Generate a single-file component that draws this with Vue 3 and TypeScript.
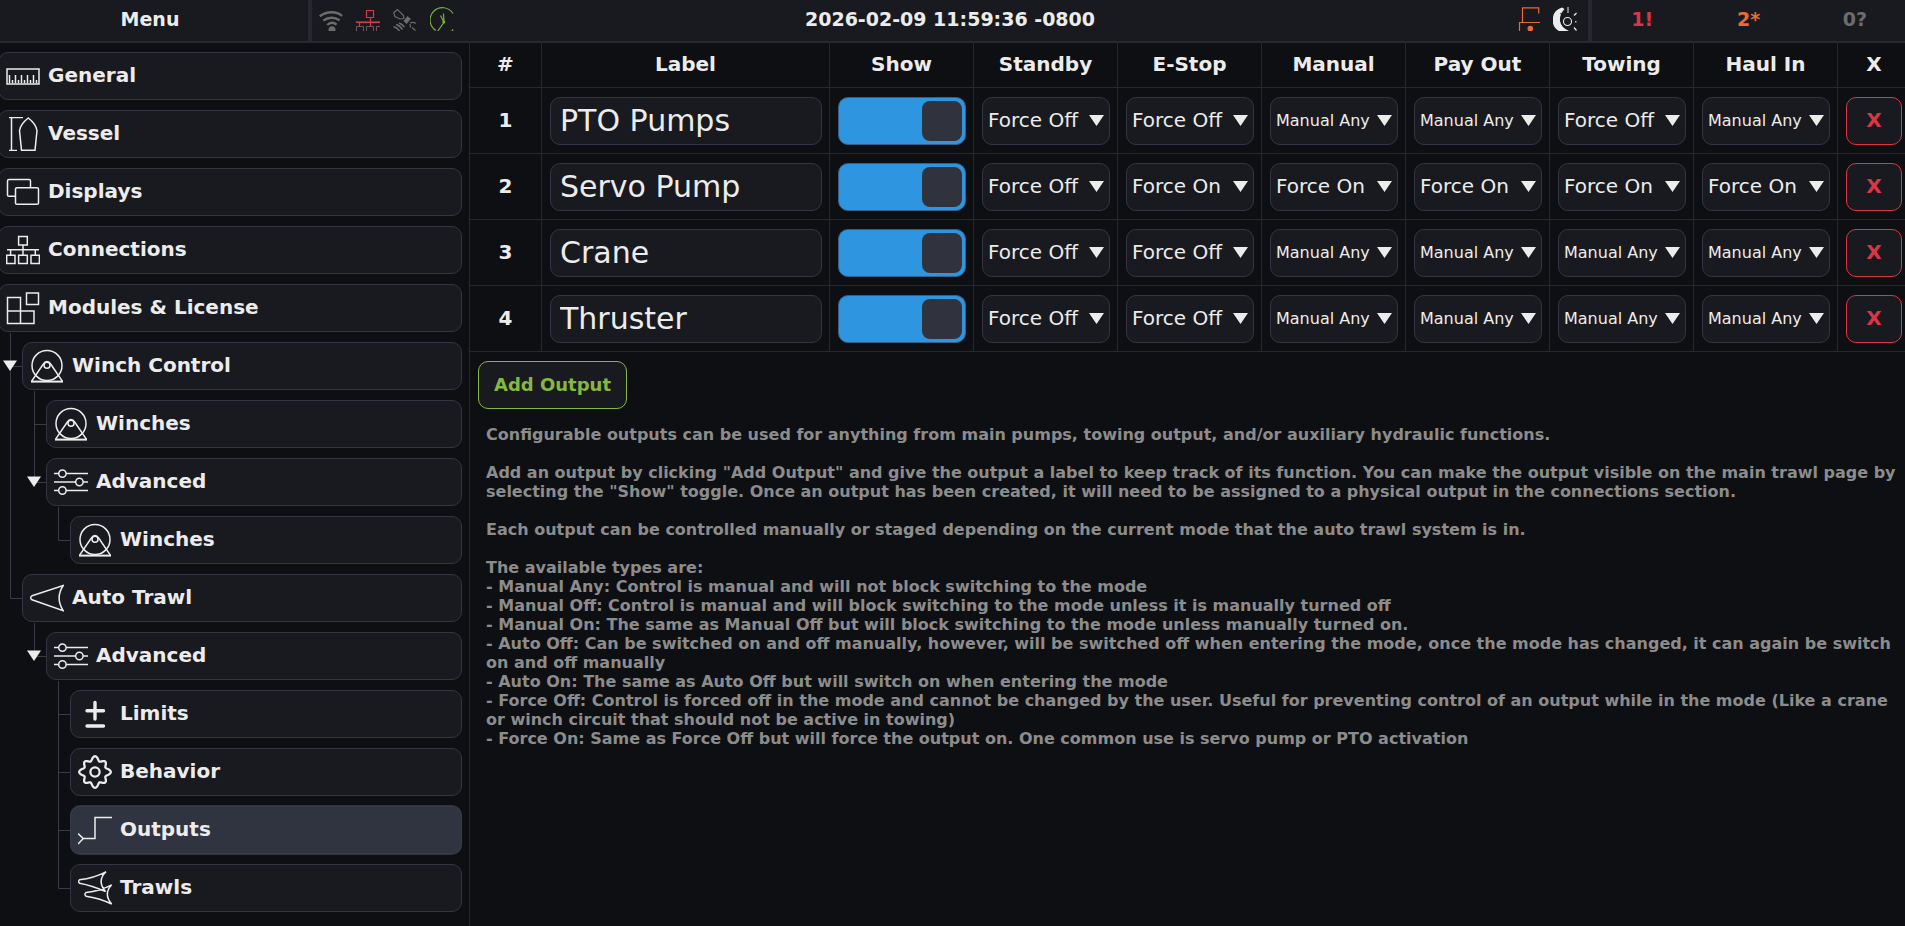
<script setup lang="ts">
import { ref } from 'vue'

type Guide = 'none' | 'line' | 'tee' | 'elbow'
type IconName =
  | 'ruler' | 'vessel' | 'displays' | 'network' | 'modules' | 'winch'
  | 'sliders' | 'trawl' | 'limits' | 'gear' | 'output' | 'trawls'

interface MenuRow {
  id: string
  label: string
  icon: IconName
  guides: Guide[]
  open?: boolean
}

interface Output {
  label: string
  show: boolean
  modes: string[]
}

const menu: MenuRow[] = [
  { id: 'general', label: 'General', icon: 'ruler', guides: [] },
  { id: 'vessel', label: 'Vessel', icon: 'vessel', guides: [] },
  { id: 'displays', label: 'Displays', icon: 'displays', guides: [] },
  { id: 'connections', label: 'Connections', icon: 'network', guides: [] },
  { id: 'modules', label: 'Modules & License', icon: 'modules', guides: [] },
  { id: 'winch', label: 'Winch Control', icon: 'winch', guides: ['tee'], open: true },
  { id: 'winch-list', label: 'Winches', icon: 'winch', guides: ['line', 'tee'] },
  { id: 'winch-adv', label: 'Advanced', icon: 'sliders', guides: ['line', 'elbow'], open: true },
  { id: 'winch-adv-list', label: 'Winches', icon: 'winch', guides: ['line', 'none', 'elbow'] },
  { id: 'trawl', label: 'Auto Trawl', icon: 'trawl', guides: ['elbow'] },
  { id: 'trawl-adv', label: 'Advanced', icon: 'sliders', guides: ['none', 'elbow'], open: true },
  { id: 'limits', label: 'Limits', icon: 'limits', guides: ['none', 'none', 'tee'] },
  { id: 'behavior', label: 'Behavior', icon: 'gear', guides: ['none', 'none', 'tee'] },
  { id: 'outputs', label: 'Outputs', icon: 'output', guides: ['none', 'none', 'tee'] },
  { id: 'trawls', label: 'Trawls', icon: 'trawls', guides: ['none', 'none', 'elbow'] },
]

const guidePaths: Record<Guide, string> = {
  none: '',
  line: 'M12.5 -5V58',
  tee: 'M12.5 -4V58M12.5 29.5H24',
  elbow: 'M12.5 -4V29.5H24',
}

const iconPaths: Record<Exclude<IconName, 'gear' | 'limits' | 'sliders' | 'winch'>, string> = {
  ruler:
    'M1 10H33V25H1ZM3.5 16V24M9.5 16V24M15.5 16V24M21.5 16V24M27.5 16V24M6.5 21V24M12.5 21V24M18.5 21V24M24.5 21V24M30.5 21V24',
  vessel:
    'M3 .5H17M5.5 .5V33.5M3 33.5H11M22.3 1Q14.5 7 13.5 13.5L15.5 33.2H29L31 13.5Q30 7 22.3 1Z',
  displays:
    'M9.5 21.3H3Q1.5 21.3 1.5 20V6Q1.5 4.5 3 4.5H23Q24.5 4.5 24.5 6V12.5M11 12.7H31Q32.5 12.7 32.5 14V28Q32.5 29.3 31 29.3H11Q9.5 29.3 9.5 28V14Q9.5 12.7 11 12.7Z',
  network:
    'M12.6 3.6H21.3V12H12.6ZM17 12V22M1 16.7H33M4.6 16.7V22M29.3 16.7V22M.7 22.3H9V30.6H.7ZM12.6 22.3H21.3V30.6H12.6ZM25 22.3H33.4V30.6H25Z',
  modules: 'M1.5 6.5H14.5V20H1.5ZM1.5 20H28V32.5H1.5ZM14.5 20V32.5M20.5 2H32.5V13.5H20.5Z',
  trawl: 'M2 14.8L33.2 4.5Q25 17 33.2 29.6L2 18.8Q-.8 16.8 2 14.8Z',
  output: 'M0 20.5L5.3 25.6L0 31M5.3 25.6H17V4.5H34',
  trawls:
    'M1.5 8.8Q16 7 28 .8Q18.5 10 27.5 20.5Q14 14.5 1.5 12.2Q-.3 10.5 1.5 8.8ZM8 21.5Q22 20 33.7 13.8Q25 23 33.7 33Q21 27 8 25.2Q5.8 23.3 8 21.5Z',
}

/* Eight-lobed outline, with the four cardinal lobes reaching slightly further. */
const gearPath = (() => {
  const points: string[] = []
  for (let i = 0; i < 192; i++) {
    const a = (i / 192) * Math.PI * 2
    const r = 13.3 + 1.9 * Math.cos(8 * a) + 0.6 * Math.cos(4 * a)
    points.push(`${(17 + r * Math.cos(a)).toFixed(2)} ${(17 + r * Math.sin(a)).toFixed(2)}`)
  }
  return `M${points.join('L')}Z`
})()

const selected = ref('outputs')

const modeNames = ['Standby', 'E-Stop', 'Manual', 'Pay Out', 'Towing', 'Haul In']
const modeTypes = ['Manual Any', 'Manual Off', 'Manual On', 'Auto Off', 'Auto On', 'Force Off', 'Force On']

const outputs = ref<Output[]>([
  { label: 'PTO Pumps', show: true, modes: ['Force Off', 'Force Off', 'Manual Any', 'Manual Any', 'Force Off', 'Manual Any'] },
  { label: 'Servo Pump', show: true, modes: ['Force Off', 'Force On', 'Force On', 'Force On', 'Force On', 'Force On'] },
  { label: 'Crane', show: true, modes: ['Force Off', 'Force Off', 'Manual Any', 'Manual Any', 'Manual Any', 'Manual Any'] },
  { label: 'Thruster', show: true, modes: ['Force Off', 'Force Off', 'Manual Any', 'Manual Any', 'Manual Any', 'Manual Any'] },
])

function addOutput() {
  outputs.value.push({ label: '', show: true, modes: modeNames.map(() => 'Manual Any') })
}

function removeOutput(index: number) {
  outputs.value.splice(index, 1)
}

const types = [
  'Manual Any: Control is manual and will not block switching to the mode',
  'Manual Off: Control is manual and will block switching to the mode unless it is manually turned off',
  'Manual On: The same as Manual Off but will block switching to the mode unless manually turned on.',
  'Auto Off: Can be switched on and off manually, however, will be switched off when entering the mode, once the mode has changed, it can again be switch on and off manually',
  'Auto On: The same as Auto Off but will switch on when entering the mode',
  'Force Off: Control is forced off in the mode and cannot be changed by the user. Useful for preventing control of an output while in the mode (Like a crane or winch circuit that should not be active in towing)',
  'Force On: Same as Force Off but will force the output on. One common use is servo pump or PTO activation',
]
</script>

<template>
  <div class="app">
    <header class="topbar">
      <button type="button" class="menu-button">Menu</button>
      <div class="status">
        <div class="status-icons">
          <svg class="status-icon" viewBox="0 0 24 24" aria-hidden="true">
            <g fill="none" stroke="#6c6c6c" stroke-width="2.4">
              <path d="M.8 9.2Q6 5.2 12.5 5.2T23 8.8" />
              <path d="M4.3 13.6Q8 10.8 12.5 10.8T20.6 13.2" />
              <path d="M8.2 18Q10.5 15.8 13 15.8T17.6 17.6" />
            </g>
            <circle cx="13" cy="22.8" r="3.5" fill="#6c6c6c" />
          </svg>
          <svg class="status-icon" viewBox="0 0 24 24" aria-hidden="true">
            <path d="M.5 24V19.5H7.5V24M10.5 24V19.5H17.5V24M20.5 24V19.5H24" fill="none" stroke="#70565a" />
            <path d="M10.5 3.5H17.5V10.5H10.5ZM14.5 10.5V19M3.5 15V19" fill="none" stroke="#dc3545" stroke-width="1.2" />
            <path d="M0 15.2H24" stroke="#dc3545" stroke-width="1.6" />
          </svg>
          <svg class="status-icon" viewBox="0 0 24 24" aria-hidden="true">
            <g fill="none" stroke="#6c6c6c" stroke-width="1.2">
              <path d="M.8 5.5L4.5 2.5L10.5 8.5L10.8 11.5L7 12L1.8 9.5Z" />
              <path d="M.5 19.5Q4 20.5 6.500 24M3 17.500Q7 18.500 9.500 22.500M6 16Q9 17 11.500 20" stroke-width="1.5" />
              <path d="M17 16Q20 14.5 23 16.5M17 17L17.5 20.5M19 20.5L22.5 23.5" />
            </g>
            <path d="M10.5 14L14.5 9L17.8 12L13.5 17Z" fill="#6c6c6c" />
          </svg>
          <svg class="status-icon" viewBox="0 0 24 24" aria-hidden="true">
            <g fill="none" stroke="#7cae3f" stroke-width="1.2">
              <path d="M5.8 23.5A12.4 12.4 0 1 1 23 6.5" />
              <path d="M7.8 24L13.5 16M13.5 6.5L14 15.5M10.5 8.5L13.8 15" />
              <path d="M21.8 24L23.2 22.5" />
            </g>
            <circle cx="13.8" cy="15" r="1.5" fill="#7cae3f" />
          </svg>
        </div>
        <time class="clock" datetime="2026-02-09T11:59:36-08:00">2026-02-09 11:59:36 -0800</time>
        <div class="status-icons end">
          <svg class="status-icon" viewBox="0 0 24 24" aria-hidden="true">
            <path d="M4.5 15.5V.8H20.7V6.5M1.5 24V15.5H22" fill="none" stroke="#ea6a33" stroke-width="1.2" />
            <circle cx="12.3" cy="21.6" r="2.8" fill="#ea6a33" />
          </svg>
          <svg class="status-icon" viewBox="0 0 24 24" aria-hidden="true">
            <path d="M9 .5A12.9 12.9 0 0 0 6 24H16Q8 20.500 7 14Q6.500 7 11.500 2Z" fill="#ececec" />
            <circle cx="14.5" cy="14.5" r="4" fill="#191a1f" stroke="#ececec" stroke-width="1.1" />
            <path d="M15 0V6" stroke="#9a9a9a" stroke-width="1.6" />
            <path d="M21 8.5L23.5 6M21 20.5L23.5 23.5M22.8 14V15.5" stroke="#ececec" stroke-width="1.2" />
            <path d="M7.5 6L9.5 8.5" stroke="#191a1f" stroke-width="1.1" />
          </svg>
        </div>
      </div>
      <div class="alerts">
        <span class="alert critical">1!</span>
        <span class="alert warning">2*</span>
        <span class="alert unknown">0?</span>
      </div>
    </header>

    <div class="body">
      <nav class="sidebar" aria-label="Menu">
        <ul class="tree">
          <li v-for="row in menu" :key="row.id" class="tree-row">
            <svg
              v-for="(guide, g) in row.guides"
              :key="g"
              class="guide"
              viewBox="0 0 24 58"
              aria-hidden="true"
            >
              <path :d="guidePaths[guide]" class="guide-line" />
              <path v-if="row.open && g === row.guides.length - 1" d="M5 23.5H19L12 34Z" class="guide-arrow" />
            </svg>
            <button
              type="button"
              class="tree-item"
              :class="{ selected: row.id === selected }"
              @click="selected = row.id"
            >
              <svg class="icon" viewBox="0 0 34 34" aria-hidden="true">
                <template v-if="row.icon === 'winch'">
                  <circle cx="17" cy="16.5" r="15" />
                  <circle cx="17" cy="16.2" r="3" />
                  <path d="M1.5 32.3L13 15.5Q17 9.5 21 15.5L32.5 32.3" />
                  <path d="M1 32.6H33" class="thick" />
                </template>
                <template v-else-if="row.icon === 'sliders'">
                  <path d="M0 8.6H34M0 17H34M0 25.5H34" />
                  <g class="knobs">
                    <circle cx="8.4" cy="8.6" r="3.7" />
                    <circle cx="25.4" cy="17" r="3.7" />
                    <circle cx="8.4" cy="25.5" r="3.7" />
                  </g>
                </template>
                <template v-else-if="row.icon === 'limits'">
                  <path d="M17 5.5V22M9 13.7H25.5M9 29H25.5" class="heavy" />
                </template>
                <template v-else-if="row.icon === 'gear'">
                  <path :d="gearPath" class="bold" />
                  <circle cx="17" cy="17" r="4.6" class="bold" />
                </template>
                <path v-else :d="iconPaths[row.icon]" />
              </svg>
              <span class="tree-label">{{ row.label }}</span>
            </button>
          </li>
        </ul>
      </nav>

      <main class="content">
        <table class="outputs">
          <colgroup>
            <col class="col-number" />
            <col class="col-label" />
            <col v-for="n in 7" :key="n" class="col-mode" />
            <col class="col-remove" />
          </colgroup>
          <thead>
            <tr>
              <th scope="col">#</th>
              <th scope="col">Label</th>
              <th scope="col">Show</th>
              <th v-for="name in modeNames" :key="name" scope="col">{{ name }}</th>
              <th scope="col">X</th>
            </tr>
          </thead>
          <tbody>
            <tr v-for="(output, i) in outputs" :key="i">
              <th scope="row">{{ i + 1 }}</th>
              <td>
                <input v-model="output.label" type="text" class="text-box" :aria-label="`Label ${i + 1}`" />
              </td>
              <td>
                <input v-model="output.show" type="checkbox" class="toggle" :aria-label="`Show ${i + 1}`" />
              </td>
              <td v-for="(name, m) in modeNames" :key="name">
                <div class="select-wrap">
                  <select
                    v-model="output.modes[m]"
                    class="select"
                    :class="{ small: output.modes[m].length > 9 }"
                    :aria-label="`${name} ${i + 1}`"
                  >
                    <option v-for="type in modeTypes" :key="type">{{ type }}</option>
                  </select>
                  <svg class="select-arrow" viewBox="0 0 15 11" aria-hidden="true">
                    <path d="M0 0H15L7.5 11Z" />
                  </svg>
                </div>
              </td>
              <td>
                <button type="button" class="remove" @click="removeOutput(i)">X</button>
              </td>
            </tr>
          </tbody>
        </table>

        <button type="button" class="add" @click="addOutput">Add Output</button>

        <section class="help">
          <p>Configurable outputs can be used for anything from main pumps, towing output, and/or auxiliary hydraulic functions.</p>
          <p>Add an output by clicking "Add Output" and give the output a label to keep track of its function. You can make the output visible on the main trawl page by selecting the "Show" toggle. Once an output has been created, it will need to be assigned to a physical output in the connections section.</p>
          <p>Each output can be controlled manually or staged depending on the current mode that the auto trawl system is in.</p>
          <div>
            The available types are:
            <ul class="types">
              <li v-for="type in types" :key="type">- {{ type }}</li>
            </ul>
          </div>
        </section>
      </main>
    </div>
  </div>
</template>

<style>
body {
  margin: 0;
  background: #0e0f12;
}
</style>

<style scoped>
.app {
  display: flex;
  flex-direction: column;
  min-height: 100vh;
  background: #0e0f12;
  color: #ececec;
  font-family: "DejaVu Sans", Verdana, sans-serif;
  font-size: 20px;
  font-weight: bold;
}

button,
input,
select {
  box-sizing: border-box;
  margin: 0;
  font: inherit;
  color: inherit;
}

button {
  cursor: pointer;
}

.topbar {
  display: flex;
  height: 41px;
  background: #191a1f;
  border-bottom: 2px solid #272731;
  font-size: 19px;
}

.menu-button {
  width: 312px;
  padding: 0 8px 3px 0;
  border: 0;
  border-right: 4px solid #272731;
  background: transparent;
}

.status {
  flex: 1;
  display: grid;
  grid-template-columns: 1fr auto 1fr;
  align-items: center;
  padding: 0 11px 4px 7px;
}

.status-icons {
  display: flex;
  gap: 13px;
}

.status-icons.end {
  justify-content: flex-end;
  gap: 11px;
}

.status-icon {
  width: 24px;
  height: 24px;
  overflow: hidden;
}

.clock {
  margin-left: 4px;
}

.alerts {
  display: flex;
  gap: 6px;
  align-items: center;
  width: 313px;
  padding-bottom: 4px;
  border-left: 4px solid #272731;
}

.alert {
  flex: 1;
  text-align: center;
}

.critical {
  color: #dc3545;
}

.warning {
  color: #ea6a33;
}

.unknown {
  color: #6c6c6c;
}

.body {
  flex: 1;
  display: flex;
}

.sidebar {
  box-sizing: border-box;
  flex: none;
  width: 470px;
  padding: 4px 7px 4px 0;
  border-right: 1px solid #272731;
}

.tree {
  margin: 0 0 0 -2px;
  padding: 0;
  list-style: none;
}

.tree-row {
  display: flex;
  align-items: center;
  height: 58px;
}

.guide {
  flex: none;
  width: 24px;
  height: 58px;
  overflow: visible;
}

.guide-line {
  fill: none;
  stroke: #3a3a4a;
}

.guide-arrow {
  fill: #ececec;
}

.tree-item {
  flex: 1;
  display: flex;
  align-items: center;
  gap: 8px;
  height: 48px;
  padding: 0 7px;
  background: #191a1f;
  border: 1px solid #343443;
  border-radius: 10px;
  text-align: left;
}

.tree-item.selected {
  background: #2f3440;
  border-color: #353b4b;
  box-shadow: 0 1px 0 #2f3440, 0 -1px 0 #2f3440;
}

.tree-label {
  padding-bottom: 3px;
}

.icon {
  flex: none;
  width: 34px;
  height: 34px;
  fill: none;
  stroke: #ececec;
  stroke-width: 1.5;
}

.icon .knobs {
  fill: #191a1f;
}

.icon .thick {
  stroke-width: 2;
}

.icon .bold {
  stroke-width: 2.3;
}

.icon .heavy {
  stroke-width: 3.4;
  stroke-linecap: round;
}

.content {
  flex: 1;
  min-width: 0;
}

.outputs {
  width: 100%;
  table-layout: fixed;
  border-collapse: separate;
  border-spacing: 0;
}

.col-number {
  width: 72px;
}

.col-label {
  width: 288px;
}

.col-remove {
  width: 67px;
}

.outputs th,
.outputs td {
  padding: 9px 7px 8px 8px;
  border-right: 1px solid #272731;
  border-bottom: 1px solid #272731;
}

.outputs th {
  padding: 0 0 2px;
  text-align: center;
}

.outputs thead th {
  height: 42px;
}

.outputs tr > :last-child {
  padding-right: 3px;
  padding-left: 8px;
  border-right: 0;
}

.text-box,
.toggle,
.select,
.remove {
  display: block;
  width: 100%;
  height: 48px;
  background: #191a1f;
  border: 1px solid #343443;
  border-radius: 10px;
}

.text-box {
  padding: 0 9px 2px;
  font-size: 30px;
  font-weight: normal;
}

.toggle {
  appearance: none;
  display: flex;
  align-items: center;
  padding: 0 3px;
  border-color: #35608a;
}

.toggle:checked {
  justify-content: flex-end;
  background: #2e96e0;
}

.toggle::before {
  content: "";
  width: 40px;
  height: 40px;
  border-radius: 8px;
  background: #30323e;
}

.select-wrap {
  display: grid;
  grid-template-columns: 1fr 15px 6px;
  align-items: center;
}

.select {
  appearance: none;
  grid-area: 1 / 1 / 2 / 4;
  padding: 0 22px 2px 5px;
  font-weight: normal;
}

.select.small {
  font-size: 16px;
}

.select-arrow {
  grid-area: 1 / 2;
  width: 15px;
  height: 11px;
  margin-bottom: 2px;
  fill: #ececec;
  pointer-events: none;
}

.remove {
  padding: 0 0 3px;
  border-color: #dc3545;
  color: #dc3545;
}

.add {
  display: block;
  height: 48px;
  margin: 9px 8px 16px;
  padding: 0 15px 2px;
  background: #191a1f;
  border: 1px solid #86b840;
  border-radius: 10px;
  color: #86b840;
  font-size: 18px;
}

.help {
  padding: 0 8px 16px 16px;
  color: #8c8c8c;
  font-size: 16px;
  line-height: 19px;
}

.help p {
  margin: 0 0 19px;
}

.types {
  margin: 0;
  padding: 0;
  list-style: none;
}
</style>
